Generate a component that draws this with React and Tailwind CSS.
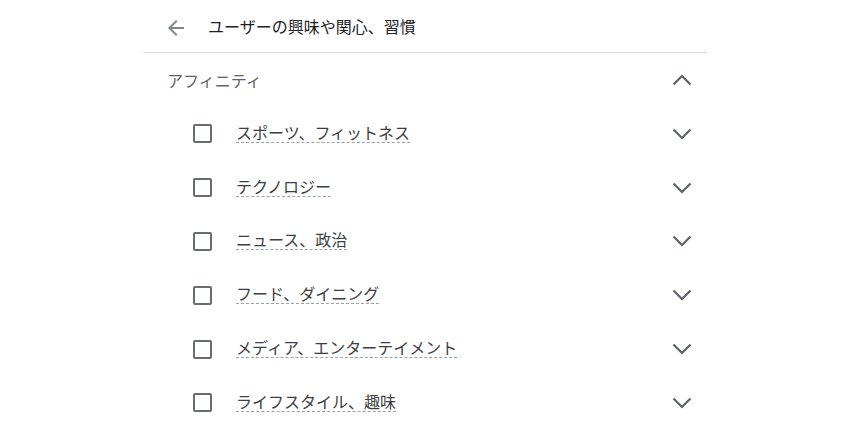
import React from "react";

const items = [
  "スポーツ、フィットネス",
  "テクノロジー",
  "ニュース、政治",
  "フード、ダイニング",
  "メディア、エンターテイメント",
  "ライフスタイル、趣味",
];

const font = { fontFamily: '"Noto Sans CJK JP", "Noto Sans", sans-serif' };

function Chevron({ up }) {
  return (
    <svg width="20" height="12" viewBox="0 0 20 12" className="block">
      <polyline
        points={up ? "1.5,10.5 10,2 18.5,10.5" : "1.5,1.5 10,10 18.5,1.5"}
        fill="none"
        stroke="#5f6368"
        strokeWidth="2.2"
      />
    </svg>
  );
}

export default function App() {
  return (
    <div className="w-[850px] h-[425px] bg-white overflow-hidden" style={font}>
      <div className="w-[564px] mx-auto">
        <div className="h-[53px] flex items-center border-b border-[#dadce0] pl-[21px]">
          <svg width="24" height="24" viewBox="0 0 24 24" className="mt-[3px]">
            <path
              d="M20 11H7.83l5.59-5.59L12 4l-8 8 8 8 1.41-1.41L7.83 13H20v-2z"
              fill="#80868b"
            />
          </svg>
          <span className="ml-[20px] text-[16px] leading-[20px] text-[#202124]">
            ユーザーの興味や関心、習慣
          </span>
        </div>
        <div className="h-[54px] flex items-center justify-between pl-[24px] pr-[15px]">
          <span className="text-[16px] leading-[20px] text-[#5f6368]">アフィニティ</span>
          <Chevron up />
        </div>
        {items.map((t) => (
          <div key={t} className="h-[53.8px] flex items-center justify-between pl-[50px] pr-[15px]">
            <div className="flex items-center">
              <div className="w-[19px] h-[19px] border-[2.5px] border-[#696d72] rounded-[2px]" />
              <span className="ml-[24px] mb-[3px] text-[16px] leading-[20px] text-[#3c4043] border-b border-dashed border-[#9aa0a6]">
                {t}
              </span>
            </div>
            <Chevron />
          </div>
        ))}
      </div>
    </div>
  );
}
